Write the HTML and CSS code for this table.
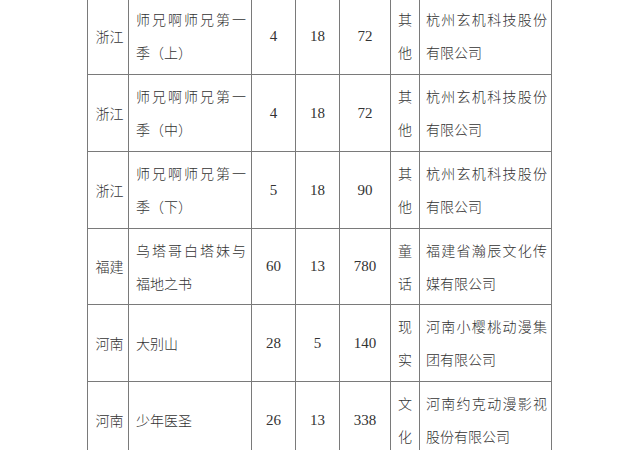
FILE: index.html
```html
<!DOCTYPE html>
<html lang="zh-CN">
<head>
<meta charset="utf-8">
<title>动漫作品表</title>
<link rel="stylesheet" href="styles.css">
</head>
<body>
<div class="page">
  <div class="sheet">
    <div class="cell prov">浙江</div>
    <div class="cell title">师兄啊师兄第一季（上）</div>
    <div class="cell num">4</div>
    <div class="cell num">18</div>
    <div class="cell num">72</div>
    <div class="cell kind">其他</div>
    <div class="cell org">杭州玄机科技股份有限公司</div>

    <div class="cell prov">浙江</div>
    <div class="cell title">师兄啊师兄第一季（中）</div>
    <div class="cell num">4</div>
    <div class="cell num">18</div>
    <div class="cell num">72</div>
    <div class="cell kind">其他</div>
    <div class="cell org">杭州玄机科技股份有限公司</div>

    <div class="cell prov">浙江</div>
    <div class="cell title">师兄啊师兄第一季（下）</div>
    <div class="cell num">5</div>
    <div class="cell num">18</div>
    <div class="cell num">90</div>
    <div class="cell kind">其他</div>
    <div class="cell org">杭州玄机科技股份有限公司</div>

    <div class="cell prov">福建</div>
    <div class="cell title">乌塔哥白塔妹与福地之书</div>
    <div class="cell num">60</div>
    <div class="cell num">13</div>
    <div class="cell num">780</div>
    <div class="cell kind">童话</div>
    <div class="cell org">福建省瀚辰文化传媒有限公司</div>

    <div class="cell prov">河南</div>
    <div class="cell title">大别山</div>
    <div class="cell num">28</div>
    <div class="cell num">5</div>
    <div class="cell num">140</div>
    <div class="cell kind">现实</div>
    <div class="cell org">河南小樱桃动漫集团有限公司</div>

    <div class="cell prov">河南</div>
    <div class="cell title">少年医圣</div>
    <div class="cell num">26</div>
    <div class="cell num">13</div>
    <div class="cell num">338</div>
    <div class="cell kind">文化</div>
    <div class="cell org">河南约克动漫影视股份有限公司</div>
  </div>
</div>
</body>
</html>
```

FILE: styles.css
```css
html, body {
  margin: 0;
  padding: 0;
  background: #ffffff;
}

.page {
  width: 640px;
  height: 450px;
  overflow: hidden;
  padding-left: 87px;
  box-sizing: border-box;
}

.sheet {
  margin-top: -3px;
  display: grid;
  grid-template-columns: 40px 122px 43px 43px 50px 28px 131px;
  grid-template-rows: repeat(3, 76px) 75px 76px 76px;
  gap: 1px;
  padding: 1px;
  width: max-content;
  background: #7a7a7a;
}

.cell {
  background: #ffffff;
  color: #333333;
  font-family: "Noto Sans CJK SC", sans-serif;
  font-weight: 300;
  font-size: 14px;
  line-height: 33px;
  display: flex;
  align-items: center;
  box-sizing: border-box;
}

.prov {
  justify-content: center;
  white-space: nowrap;
  padding-left: 3px;
}

.title {
  padding: 0 5px 0 7px;
  text-align: justify;
}

.num {
  justify-content: center;
  font-family: "Liberation Serif", "Times New Roman", serif;
  font-weight: 400;
  font-size: 15px;
}

.kind {
  justify-content: center;
  text-align: center;
  padding: 0 6px;
}

.org {
  padding: 0 4px 0 6px;
  text-align: justify;
}
```
